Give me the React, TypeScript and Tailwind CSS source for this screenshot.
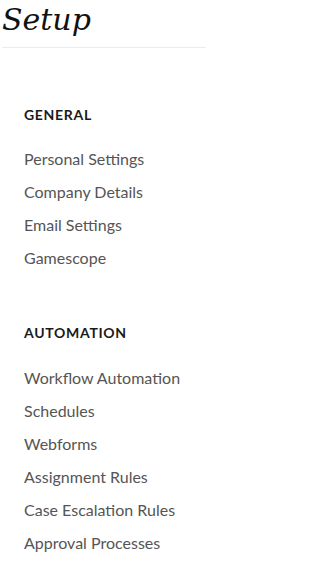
export default function App() {
  const general = ['Personal Settings', 'Company Details', 'Email Settings', 'Gamescope'];
  const automation = [
    'Workflow Automation',
    'Schedules',
    'Webforms',
    'Assignment Rules',
    'Case Escalation Rules',
    'Approval Processes',
  ];

  return (
    <div className="w-[206px] bg-white font-['Lato','Open_Sans',sans-serif]">
      {/* Title */}
      <div className="ml-[2px] h-[48px] border-b border-[#ededed]">
        <h1 className="font-['DejaVu_Serif','Liberation_Serif',serif] italic text-[30px] leading-[40px] text-[#111]">
          Setup
        </h1>
      </div>

      {/* General */}
      <div className="pl-6 pt-[57px]">
        <h2 className="text-[14px] font-bold leading-[20px] tracking-[0.7px] text-[#1a1a1a]">GENERAL</h2>
        <ul className="mt-[17px]">
          {general.map((item) => (
            <li key={item} className="text-[16px] leading-[33px] text-[#555]">
              {item}
            </li>
          ))}
        </ul>
      </div>

      {/* Automation */}
      <div className="pl-6 pt-[49px]">
        <h2 className="text-[14px] font-bold leading-[20px] tracking-[0.7px] text-[#1a1a1a]">AUTOMATION</h2>
        <ul className="mt-[18px]">
          {automation.map((item) => (
            <li key={item} className="text-[16px] leading-[33px] text-[#555]">
              {item}
            </li>
          ))}
        </ul>
      </div>
    </div>
  );
}
